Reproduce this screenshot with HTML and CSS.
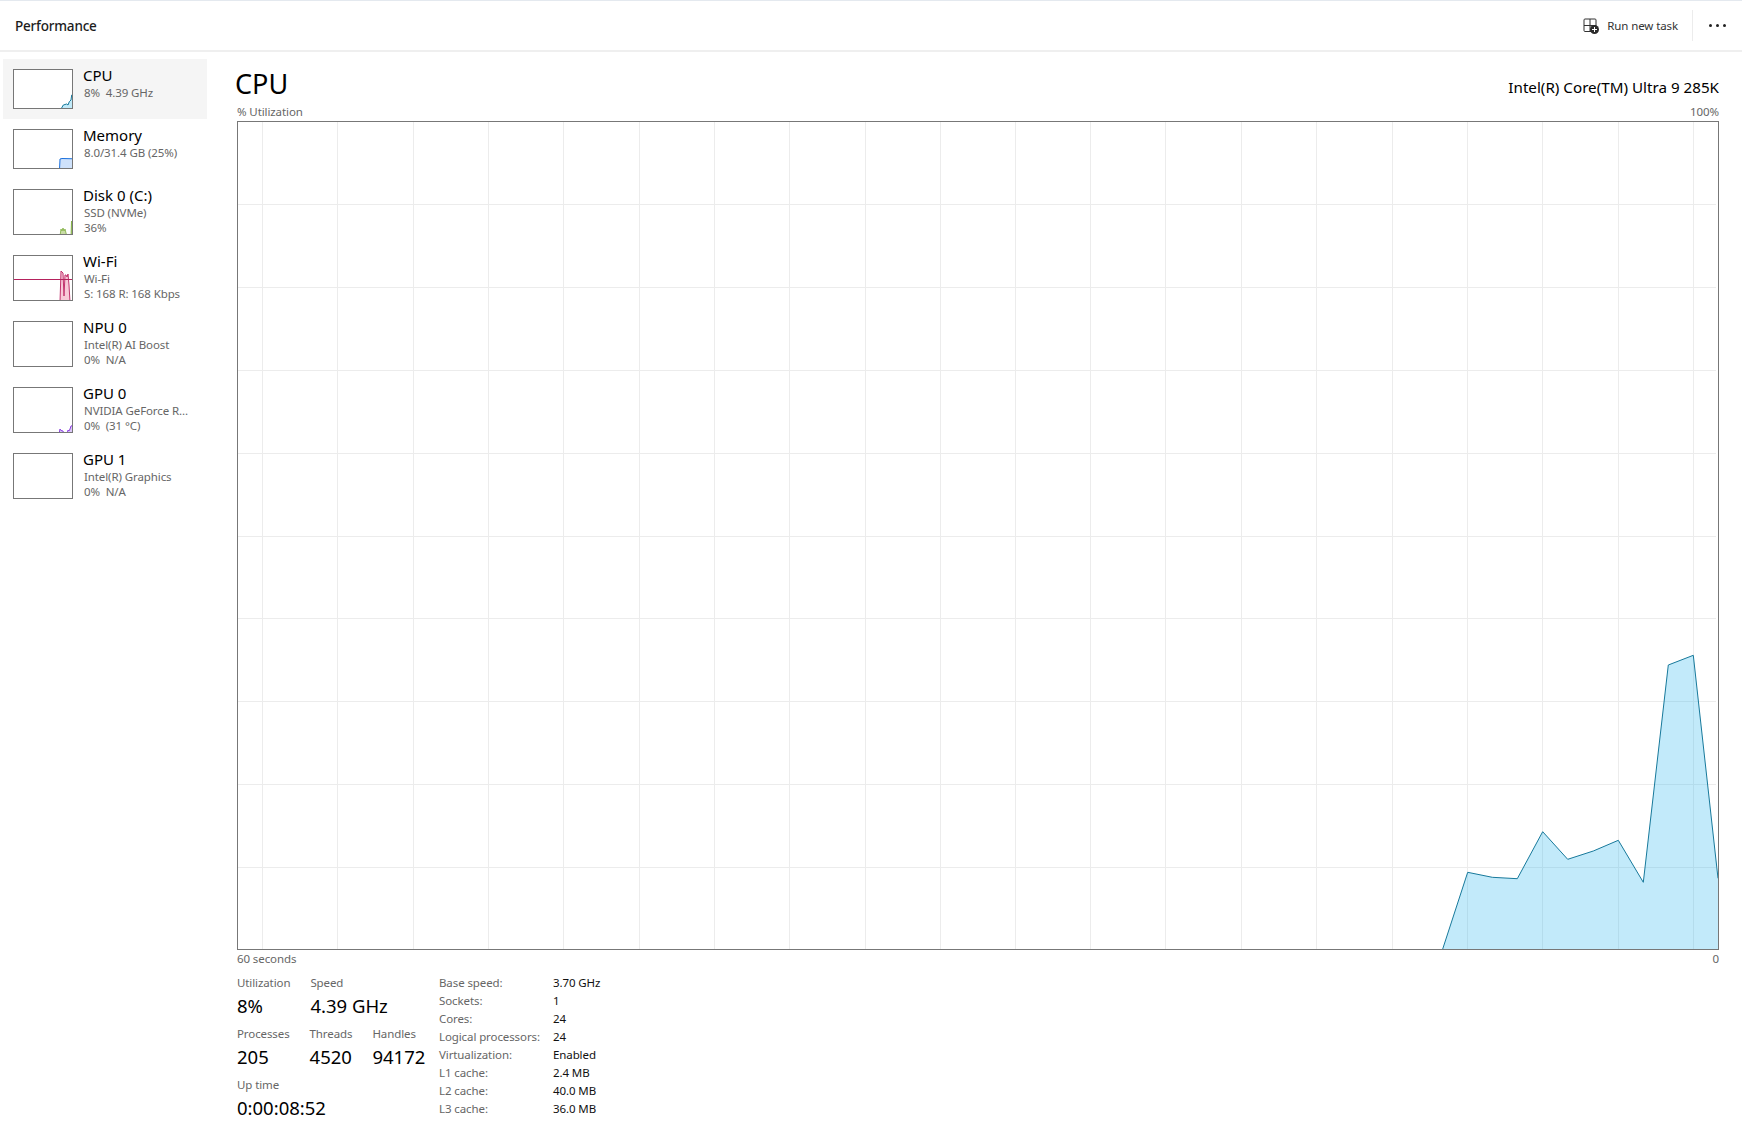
FILE: index.html
```html
<!DOCTYPE html>
<html lang="en">
<head>
    <meta charset="UTF-8">
    <meta name="viewport" content="width=device-width, initial-scale=1.0">
    <title>Performance</title>
    <link rel="stylesheet" href="styles.css">
</head>
<body>

<div class="app">
    <header class="topbar">
        <div class="page-title">Performance</div>
        <div class="actions">
            <button class="run-task" type="button">
                <svg class="run-icon" width="16" height="16" viewBox="0 0 16 16" fill="none">
                    <path d="M9 13.5H2a1 1 0 0 1-1-1V2a1 1 0 0 1 1-1h10a1 1 0 0 1 1 1v6M7 1v12.5M1 7.5h12" stroke="#333" stroke-width="1"/>
                    <circle cx="11.5" cy="11.5" r="4.5" fill="#2b2b2b"/>
                    <path d="M11.5 9v5M9 11.5h5" stroke="#fff" stroke-width="1"/>
                </svg>
                <span>Run new task</span>
            </button>
            <div class="divider"></div>
            <button class="more" type="button"><i></i><i></i><i></i></button>
        </div>
    </header>

    <div class="content">
        <nav class="sidebar">
            <div class="item selected">
                <svg class="thumb" width="60" height="40" viewBox="0 0 58 38">
                    <path class="cpu-line" d="M46.5 40L49.3 35 52.7 34 54 35 55.3 31.7 57 30 57.7 25 60 25V40Z"/>
                </svg>
                <div class="item-text">
                    <div class="item-name">CPU</div>
                    <div class="item-sub">8%&nbsp; 4.39 GHz</div>
                </div>
            </div>
            <div class="item">
                <svg class="thumb" width="60" height="40" viewBox="0 0 58 38">
                    <path class="mem-line" d="M45.5 40L46 29 48 28.5 60 28.8V40Z"/>
                </svg>
                <div class="item-text">
                    <div class="item-name">Memory</div>
                    <div class="item-sub">8.0/31.4 GB (25%)</div>
                </div>
            </div>
            <div class="item tall">
                <svg class="thumb" width="60" height="46" viewBox="0 0 58 44">
                    <path class="disk-line" d="M46 46L47 39 48 41 49 38 50 41 51 39 52 43 53 46H57L57.5 31 58 46Z"/>
                </svg>
                <div class="item-text">
                    <div class="item-name">Disk 0 (C:)</div>
                    <div class="item-sub">SSD (NVMe)</div>
                    <div class="item-sub">36%</div>
                </div>
            </div>
            <div class="item tall">
                <svg class="thumb" width="60" height="46" viewBox="0 0 58 44">
                    <path class="wifi-line" d="M46 46L47 15 48 16 49 17 50 40 51 19 52 19 53 21 54 18 55 29 56 46Z"/>
                    <path class="wifi-base" d="M0 23.5H58"/>
                </svg>
                <div class="item-text">
                    <div class="item-name">Wi-Fi</div>
                    <div class="item-sub">Wi-Fi</div>
                    <div class="item-sub">S: 168 R: 168 Kbps</div>
                </div>
            </div>
            <div class="item tall">
                <svg class="thumb" width="60" height="46" viewBox="0 0 58 44"></svg>
                <div class="item-text">
                    <div class="item-name">NPU 0</div>
                    <div class="item-sub">Intel(R) AI Boost</div>
                    <div class="item-sub">0%&nbsp; N/A</div>
                </div>
            </div>
            <div class="item tall">
                <svg class="thumb" width="60" height="46" viewBox="0 0 58 44">
                    <path class="gpu-line" d="M45 46L46 41 47 42.5 49 43 50 46H53L54 42 55 43 56 41 57 38 60 37V46Z"/>
                </svg>
                <div class="item-text">
                    <div class="item-name">GPU 0</div>
                    <div class="item-sub">NVIDIA GeForce R...</div>
                    <div class="item-sub">0%&nbsp; (31 °C)</div>
                </div>
            </div>
            <div class="item tall">
                <svg class="thumb" width="60" height="46" viewBox="0 0 58 44"></svg>
                <div class="item-text">
                    <div class="item-name">GPU 1</div>
                    <div class="item-sub">Intel(R) Graphics</div>
                    <div class="item-sub">0%&nbsp; N/A</div>
                </div>
            </div>
        </nav>

        <main class="main">
            <div class="main-head">
                <h1 class="main-title">CPU</h1>
                <div class="cpu-model">Intel(R) Core(TM) Ultra 9 285K</div>
            </div>
            <div class="axis-row">
                <span>% Utilization</span>
                <span>100%</span>
            </div>

            <div class="chart">
                <!-- viewBox is in page pixels so the points read straight off the screenshot -->
                <svg width="1480" height="827" viewBox="238 122 1480 827">
                    <g class="grid">
                        <path d="M238 204.5H1716M238 287.5H1716M238 370.5H1716M238 453.5H1716M238 536.5H1716M238 618.5H1716M238 701.5H1716M238 784.5H1716M238 867.5H1716"/>
                        <path d="M262.5 122V949M337.5 122V949M413.5 122V949M488.5 122V949M563.5 122V949M639.5 122V949M714.5 122V949M789.5 122V949M865.5 122V949M940.5 122V949M1015.5 122V949M1090.5 122V949M1165.5 122V949M1241.5 122V949M1316.5 122V949M1392.5 122V949M1467.5 122V949M1542.5 122V949M1618.5 122V949M1693.5 122V949"/>
                    </g>
                    <path class="cpu-area" d="M1442.7 949L1467.7 872.3 1492.3 877.3 1517.3 878.7 1542.7 831.7 1567.7 859.3 1593.3 851 1618.3 840.3 1643.3 882.3 1668.3 665 1693.3 655.3 1718 878.3V949Z"/>
                    <path class="cpu-stroke" d="M1442.7 949L1467.7 872.3 1492.3 877.3 1517.3 878.7 1542.7 831.7 1567.7 859.3 1593.3 851 1618.3 840.3 1643.3 882.3 1668.3 665 1693.3 655.3 1718 878.3"/>
                </svg>
            </div>

            <div class="axis-row">
                <span>60 seconds</span>
                <span>0</span>
            </div>

            <div class="stats">
                <div class="counters">
                    <div class="stat-row">
                        <div class="stat">
                            <div class="stat-label">Utilization</div>
                            <div class="stat-value">8%</div>
                        </div>
                        <div class="stat">
                            <div class="stat-label">Speed</div>
                            <div class="stat-value">4.39 GHz</div>
                        </div>
                    </div>
                    <div class="stat-row">
                        <div class="stat">
                            <div class="stat-label">Processes</div>
                            <div class="stat-value">205</div>
                        </div>
                        <div class="stat">
                            <div class="stat-label">Threads</div>
                            <div class="stat-value">4520</div>
                        </div>
                        <div class="stat">
                            <div class="stat-label">Handles</div>
                            <div class="stat-value">94172</div>
                        </div>
                    </div>
                    <div class="stat-row">
                        <div class="stat">
                            <div class="stat-label">Up time</div>
                            <div class="stat-value">0:00:08:52</div>
                        </div>
                    </div>
                </div>

                <div class="specs">
                    <span class="spec-key">Base speed:</span><span class="spec-val">3.70 GHz</span>
                    <span class="spec-key">Sockets:</span><span class="spec-val">1</span>
                    <span class="spec-key">Cores:</span><span class="spec-val">24</span>
                    <span class="spec-key">Logical processors:</span><span class="spec-val">24</span>
                    <span class="spec-key">Virtualization:</span><span class="spec-val">Enabled</span>
                    <span class="spec-key">L1 cache:</span><span class="spec-val">2.4 MB</span>
                    <span class="spec-key">L2 cache:</span><span class="spec-val">40.0 MB</span>
                    <span class="spec-key">L3 cache:</span><span class="spec-val">36.0 MB</span>
                </div>
            </div>
        </main>
    </div>
</div>

</body>
</html>
```

FILE: styles.css
```css
* {
    box-sizing: border-box;
}
body {
    margin: 0;
    background-color: #fff;
    color: #000;
    font-family: "Noto Sans", "Open Sans", sans-serif;
    font-size: 11.5px;
    letter-spacing: -0.1px;
}
.app {
    height: 100vh;
    overflow: hidden;
}

/* top bar */
.topbar {
    display: flex;
    justify-content: space-between;
    align-items: center;
    height: 52px;
    padding-left: 15px;
    border-top: 1px solid #e4e9ef;
    border-bottom: 2px solid #efefef;
}
.page-title {
    font-size: 13.5px;
    font-weight: 500;
    letter-spacing: -0.2px;
    color: #1c1c1c;
}
.actions {
    display: flex;
    align-items: center;
}
.run-task {
    display: flex;
    align-items: center;
    gap: 8px;
    padding: 0;
    border: none;
    background: none;
    font: inherit;
    letter-spacing: inherit;
    color: #333;
}
.divider {
    width: 1px;
    height: 31px;
    margin: 0 16px 0 14px;
    background-color: #ececec;
}
.more {
    display: flex;
    gap: 4px;
    width: 33px;
    padding: 0;
    border: none;
    background: none;
}
.more i {
    width: 3px;
    height: 3px;
    border-radius: 50%;
    background-color: #222;
}

/* device list */
.content {
    display: flex;
}
.sidebar {
    flex: none;
    width: 207px;
    padding: 7px 0 0 3px;
}
.item {
    display: flex;
    gap: 10px;
    height: 60px;
    padding: 10px 0 0 10px;
}
.item.tall {
    height: 66px;
}
.item.selected {
    background-color: #f5f5f5;
}
.thumb {
    flex: none;
    border: 1px solid #777;
    background-color: #fff;
}
.item-text {
    margin-top: -4px;
}
.item-name {
    font-size: 15px;
    line-height: 20px;
    letter-spacing: 0;
}
.item-sub {
    padding-left: 1px;
    line-height: 15px;
    color: #666;
    white-space: nowrap;
}
.cpu-line {
    fill: #c1eaf9;
    stroke: #17799b;
    stroke-width: 1;
}
.mem-line {
    fill: #cfe2fb;
    stroke: #1a6fdc;
    stroke-width: 1;
}
.disk-line {
    fill: #c9dca6;
    stroke: #7fae3f;
    stroke-width: 0.8;
}
.wifi-line {
    fill: #f8c9d8;
    stroke: #c2336e;
    stroke-width: 1;
}
.wifi-base {
    fill: none;
    stroke: #b5225d;
    stroke-width: 1;
}
.gpu-line {
    fill: #dcc8f8;
    stroke: #8b3fe0;
    stroke-width: 1;
}

/* main panel */
.main {
    flex: 1;
    padding: 0 23px 0 30px;
}
.main-head {
    display: flex;
    justify-content: space-between;
    align-items: flex-end;
    height: 52px;
}
.main-title {
    margin: 0 0 1px -2px;
    font-size: 27px;
    font-weight: 400;
    line-height: 38px;
    letter-spacing: 0;
}
.cpu-model {
    font-size: 15.2px;
    line-height: 24px;
    margin-bottom: 5px;
    letter-spacing: 0;
}
.axis-row {
    display: flex;
    justify-content: space-between;
    height: 16px;
    line-height: 16px;
    color: #666;
}
.chart {
    height: 829px;
    margin: 1px 0;
    border: 1px solid #777;
}
.chart svg {
    display: block;
}
.grid path {
    fill: none;
    stroke: #ececec;
    stroke-width: 1;
}
.cpu-area {
    fill: #1eb2ec;
    fill-opacity: 0.27;
}
.cpu-stroke {
    fill: none;
    stroke: #17799b;
    stroke-width: 1;
}

/* numbers under the chart */
.stats {
    display: flex;
    margin-top: 8px;
}
.counters {
    display: flex;
    flex-direction: column;
    gap: 7px;
    flex: none;
    width: 202px;
}
.stat-row {
    display: flex;
    gap: 20px;
}
.stat-label {
    line-height: 16px;
    color: #666;
}
.stat-value {
    margin-top: 2px;
    font-size: 18.5px;
    line-height: 26px;
    letter-spacing: 0;
    white-space: nowrap;
}
.specs {
    display: grid;
    grid-template-columns: 114px auto;
    grid-auto-rows: 16px;
    row-gap: 2px;
    line-height: 16px;
}
.spec-key {
    color: #666;
    white-space: nowrap;
}
.spec-val {
    color: #111;
}
```
